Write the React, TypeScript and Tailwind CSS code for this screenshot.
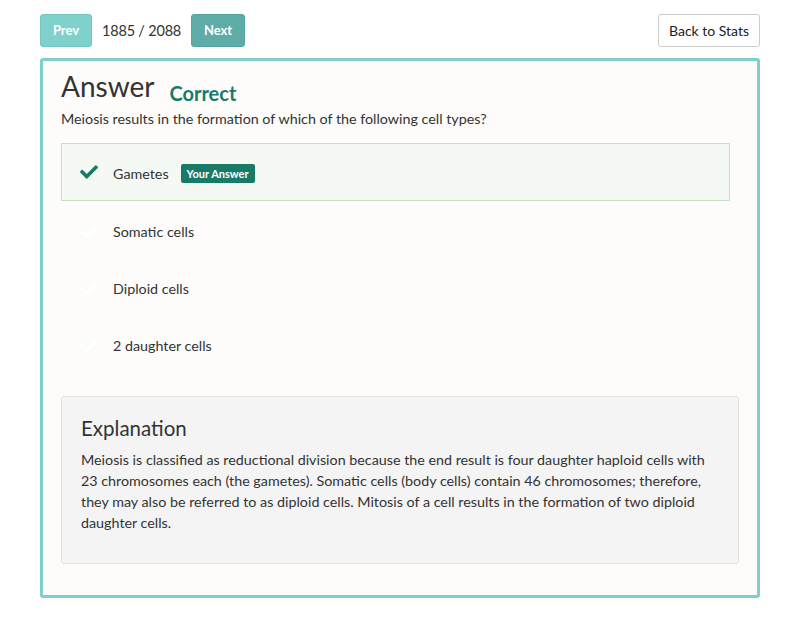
import { FaCheck } from 'react-icons/fa';

const options = [
  { label: 'Gametes', chosen: true },
  { label: 'Somatic cells', chosen: false },
  { label: 'Diploid cells', chosen: false },
  { label: '2 daughter cells', chosen: false },
];

export default function App() {
  return (
    <div className="min-h-screen bg-white px-10 pt-[14px] text-[#333] font-['Lato',sans-serif]">
      {/* Nav */}
      <div className="flex items-center justify-between">
        <div className="flex items-center gap-[10px]">
          <button className="h-[33px] w-[52px] rounded-[3px] border border-[#74c7c3] bg-[#80d0cc] text-[13px] font-bold text-white">
            Prev
          </button>
          <span className="text-[14.5px] tracking-[-0.2px] text-[#333]">1885 / 2088</span>
          <button className="h-[33px] w-[54px] rounded-[3px] border border-[#56a49f] bg-[#5eaca7] text-[13px] font-bold text-white">
            Next
          </button>
        </div>
        <button className="h-[33px] w-[102px] rounded-[3px] border border-[#ccc] bg-white text-[14px] text-[#222]">
          Back to Stats
        </button>
      </div>

      {/* Card */}
      <div className="mt-[11px] rounded-[3px] border-[3px] border-[#7fcfcd] bg-[#fdfcfa] px-[18px] pt-[7px] pb-[31px]">
        <div className="flex items-baseline gap-[15px]">
          <h1 className="text-[28px] leading-[36px] text-[#333]">Answer</h1>
          <span className="relative top-[4px] text-[20px] font-bold text-[#1a7a68]">Correct</span>
        </div>
        <p className="mt-[5px] text-[14.3px] leading-[20px] text-[#333]">
          Meiosis results in the formation of which of the following cell types?
        </p>

        <div className="mt-[14px] mr-[9px]">
          {options.map((o) =>
            o.chosen ? (
              <div
                key={o.label}
                className="flex h-[58px] items-center border border-[#c8dfc5] bg-[#f4faf3] pl-[16px] pt-[3px]"
              >
                <FaCheck className="relative -top-[2px] h-[18px] w-[22px] text-[#1a7a68]" />
                <span className="ml-[13px] text-[14.3px] text-[#333]">{o.label}</span>
                <span className="ml-[12px] rounded-[2px] bg-[#1a7a68] px-[6px] py-[2px] text-[11px] font-bold leading-[15px] text-white">
                  Your Answer
                </span>
              </div>
            ) : (
              <div key={o.label} className="flex h-[57px] items-center pl-[17px] pt-[4px]">
                <FaCheck className="h-[18px] w-[22px] text-white" />
                <span className="ml-[13px] text-[14.3px] text-[#333]">{o.label}</span>
              </div>
            )
          )}
        </div>

        {/* Explanation */}
        <div className="mt-[24px] rounded-[3px] border border-[#e3e3e3] bg-[#f4f4f4] px-[19px] pt-[16px] pb-[30px]">
          <h2 className="text-[20.5px] leading-[30px] text-[#333]">Explanation</h2>
          <p className="mt-[6px] text-[14.3px] leading-[21px] text-[#333]">
            Meiosis is classified as reductional division because the end result is four daughter haploid cells with
            23 chromosomes each (the gametes). Somatic cells (body cells) contain 46 chromosomes; therefore,
            they may also be referred to as diploid cells. Mitosis of a cell results in the formation of two diploid
            daughter cells.
          </p>
        </div>
      </div>
    </div>
  );
}
